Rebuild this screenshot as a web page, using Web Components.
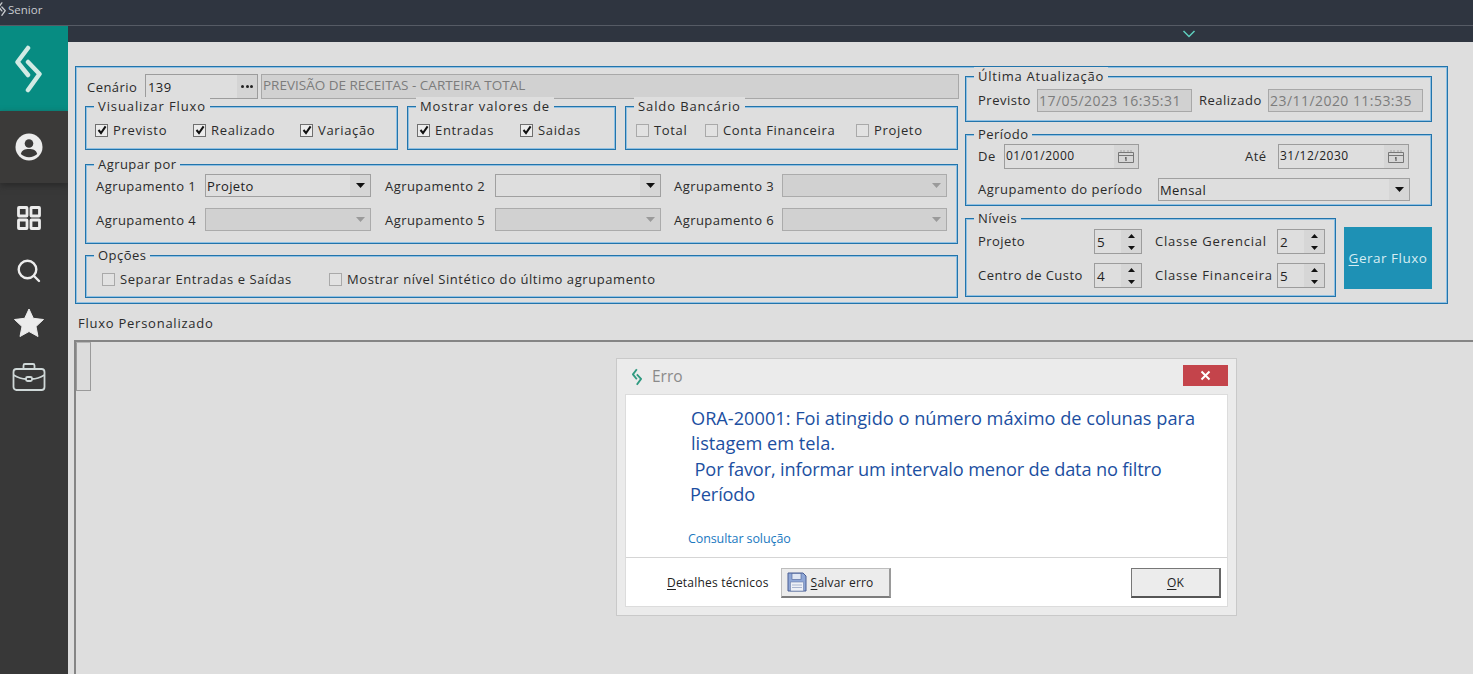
<!DOCTYPE html>
<html lang="pt-BR"><head><meta charset="utf-8"><title>Senior</title>
<style>
html,body{margin:0;height:100%;overflow:hidden;background:#dedede;font:13px "Open Sans","Noto Sans",sans-serif;color:#2b2b2b}
</style></head><body>
<x-app></x-app>
<script>
const def=(name,css,html)=>{
  customElements.define(name,class extends HTMLElement{
    constructor(){super();this.attachShadow({mode:'open'});}
    connectedCallback(){
      const a=n=>this.getAttribute(n)||'';
      this.shadowRoot.innerHTML=`<style>${css}</style>`+(typeof html==='function'?html(a,this):html);
    }
  });
};
const arrow=(c)=>`<svg width="9" height="5" viewBox="0 0 9 5"><path d="M0 0h9L4.500 5z" fill="${c}"/></svg>`;
const logo=(c,w)=>`<svg viewBox="0 0 27 48" width="${w}" height="${w*48/27}" fill="none" stroke="${c}" stroke-width="4.500" stroke-linecap="round" stroke-linejoin="round"><path d="M13 3 2.500 17 13 30"/><path d="M13 17l11.500 12L13 45"/></svg>`;

def('x-group',`:host{display:block;box-sizing:border-box}
fieldset{box-sizing:border-box;margin:0;padding:0 1px 1px;height:100%;border:1px solid #2274ab;border-radius:0;box-shadow:inset 0 0 0 1px #8fc0e2;min-width:0}
legend{padding:0 4px;margin-left:7px;height:18px;line-height:18px;font-size:13px;letter-spacing:var(--ls,.45px);color:#2b2b2b;background:#dedede}`,
a=>`<fieldset><legend>${a('label')}</legend><slot></slot></fieldset>`);

def('x-check',`:host{display:inline-flex;align-items:center;gap:5px;height:18px;white-space:nowrap;letter-spacing:var(--cls,.66px)}
.b{box-sizing:border-box;width:13px;height:13px;border:1px solid #a9a9a9;display:flex;align-items:center;justify-content:center;background:#e2e2e2;flex:none}
.b.on{border-color:#6f6f6f;background:#ececec}`,
a=>`<span class="b ${a('on')?'on':''}">${a('on')?'<svg width="10" height="10" viewBox="0 0 10 10"><path d="M1.500 5 4 8l4.600-6.600" fill="none" stroke="#111" stroke-width="2"/></svg>':''}</span><span>${a('label')}</span>`);

def('x-input',`:host{display:flex;box-sizing:border-box;height:23px;align-items:center;border:1px solid #9c9c9c;padding:0 1px 1px;white-space:nowrap;overflow:hidden;color:#222}
:host([off]){background:#d1d1d1;border-color:#a8a8a8;color:#7c7c7c}`,`<slot></slot>`);

def('x-lookup',`:host{display:flex;box-sizing:border-box;height:25px;align-items:center;border:1px solid #9c9c9c;padding-left:2px;letter-spacing:.4px;color:#222}
span{flex:1}b{width:20px;height:100%;background:#d4d4d4;display:flex;align-items:center;justify-content:center;gap:1.500px}
i{width:3px;height:3px;border-radius:50%;background:#222}`,`<span><slot></slot></span><b><i></i><i></i><i></i></b>`);

def('x-combo',`:host{display:flex;box-sizing:border-box;height:23px;align-items:center;border:1px solid #a0a0a0;padding-left:1px;letter-spacing:.4px;color:#222}
:host([off]){background:#d1d1d1;border-color:#ababab}
span{flex:1}b{width:20px;height:100%;background:#d6d6d6;display:flex;align-items:center;justify-content:center}
:host([off]) b{background:none}`,
(a,t)=>`<span><slot></slot></span><b>${arrow(t.hasAttribute('off')?'#9a9a9a':'#111')}</b>`);

def('x-date',`:host{display:flex;box-sizing:border-box;height:25px;align-items:center;border:1px solid #9c9c9c;padding:0 0 0 1px;font-size:12px;color:#222}
span{flex:1;padding-bottom:2px}b{width:24px;height:100%;background:#d6d6d6;display:flex;align-items:center;justify-content:center}`,
`<span><slot></slot></span><b><svg width="18" height="15" viewBox="0 0 18 15" fill="none" stroke="#777"><path d="M1.500 3.500h15v10h-15zM1.500 6.500h15"/><path d="M4 1.500v2M7 1.500v2M11 1.500v2M14 1.500v2" stroke-dasharray="1 1"/><path d="M9 8v4M8 9h1" stroke="#444"/></svg></b>`);

def('x-spin',`:host{display:flex;box-sizing:border-box;height:25px;width:48px;align-items:center;border:1px solid #9c9c9c;padding-left:2px;color:#222;font-size:13.500px}
span{flex:1}b{width:20px;height:100%;display:flex;flex-direction:column;gap:1px;background:#d6d6d6}
em{flex:1;display:flex;align-items:center;justify-content:center}
em+em svg{transform:rotate(180deg)}`,
`<span><slot></slot></span><b><em><svg width="7" height="4" viewBox="0 0 7 4"><path d="M3.500 0 7 4H0z" fill="#111"/></svg></em><em><svg width="7" height="4" viewBox="0 0 7 4"><path d="M3.500 0 7 4H0z" fill="#111"/></svg></em></b>`);

def('x-titlebar',`:host{display:flex;align-items:center;gap:2px;box-sizing:border-box;height:26px;background:#2f3540;border-bottom:1px solid #565b65;padding:0 0 6px 0;color:#c9ccd0;font-size:11.500px;overflow:hidden}
svg{margin-left:-2px;flex:none}`,
()=>`${logo('#c9ccd0',8)}<span>Senior</span>`);

def('x-strip',`:host{display:flex;justify-content:flex-end;align-items:center;box-sizing:border-box;height:16px;background:#2f3540;padding-right:277px}`,
`<svg width="14" height="8" viewBox="0 0 14 8" fill="none" stroke="#5fcfbe" stroke-width="1.500"><path d="M1.500 1 7 6.500 12.500 1"/></svg>`);

def('x-sidebar',`:host{display:flex;flex-direction:column;width:68px;flex:none;background:#383838;color:#ececec}
.logo{height:85px;background:#078c82;display:flex;align-items:center;justify-content:center;padding-right:12px;box-sizing:border-box}
.user{height:72px;background:#3b3a39;display:flex;align-items:center;justify-content:center;box-shadow:0 3px 6px #2a2a2a;padding-right:11px;box-sizing:border-box}
nav{display:flex;flex-direction:column;align-items:center;padding:23px 11px 0 0;box-sizing:border-box;width:100%}
nav div{height:53px;display:flex;align-items:flex-start;justify-content:center;width:100%}`,
`<div class="logo">${logo('#d2eae4',27)}</div>
<div class="user"><svg width="28" height="28" viewBox="0 0 28 28"><circle cx="14" cy="14" r="13.500" fill="#ececec"/><circle cx="14" cy="10.500" r="4.300" fill="#3b3a39"/><path d="M5.800 21c1-4 4-5 8.200-5s7.200 1 8.200 5c-2 2-5 3.200-8.200 3.200S7.800 23 5.800 21z" fill="#3b3a39"/></svg></div>
<nav>
<div><svg width="24" height="24" viewBox="0 0 24 24" fill="none" stroke="#ececec" stroke-width="2.800"><rect x="1.500" y="1.500" width="8.500" height="8.500" rx=".5"/><rect x="14" y="1.500" width="8.500" height="8.500" rx=".5"/><rect x="1.500" y="14" width="8.500" height="8.500" rx=".5"/><rect x="14" y="14" width="8.500" height="8.500" rx=".5"/></svg></div>
<div><svg width="24" height="24" viewBox="0 0 24 24" fill="none" stroke="#ececec" stroke-width="2.400" stroke-linecap="round"><circle cx="10.500" cy="10.500" r="8.800"/><path d="M17 17l5 5"/></svg></div>
<div><svg width="30" height="29" viewBox="0 0 30 29" style="margin-top:-4px"><path d="M15 1l4.300 9.300 10.200 1.200-7.500 7 2 10L15 23.500 6 28.500l2-10-7.500-7 10.200-1.200z" fill="#ececec" stroke="#ececec" stroke-linejoin="round"/></svg></div>
<div><svg width="34" height="30" viewBox="0 0 34 30" fill="none" stroke="#cfd8d8" stroke-width="1.800" style="margin-top:-3px"><rect x="1.500" y="7" width="31" height="21" rx="3"/><path d="M11.500 7V3.500a1.500 1.500 0 0 1 1.500-1.500h8a1.500 1.500 0 0 1 1.500 1.500V7"/><path d="M1.500 13c5 3 10 4 12.500 4M32.500 13c-5 3-10 4-12.500 4"/><rect x="14" y="15" width="6" height="4" rx="1.500"/></svg></div>
</nav>`);

def('x-form',`:host{display:block;box-sizing:border-box;width:1373px;height:238px;border:1px solid #2274ab;box-shadow:inset 0 0 0 1px #8fc0e2;padding:1px 0 0 9px}
.cols{display:flex;gap:7px;width:1347px}
.l{width:873px;flex:none;padding-top:6px;box-sizing:border-box}
.r{width:467px;flex:none;margin-top:-1px}
.cen{display:flex;align-items:center;height:25px;padding-left:2px;letter-spacing:.45px}
.cen>span{width:58px}
.cen x-lookup{width:113px}
.cen x-input{width:698px;height:25px;margin-left:3px;margin-right:-1px;font-size:13.500px;letter-spacing:0;padding-bottom:3px}
.three{display:flex;gap:9px;margin-top:-2px}
.three x-group{height:53px}
.checks{display:flex;align-items:center;padding:6px 0 0 8px;height:18px}
.agr{height:89px;margin-top:5px}
.grid{display:grid;grid-template-columns:109px 166px 14px 110px 166px 13px 108px 165px;grid-auto-rows:23px;row-gap:11px;padding:1px 0 0 9px;align-items:center;letter-spacing:.45px}
.op{height:52px;margin-top:2px;--cls:.57px}
.ult{height:55px}
.row{display:flex;align-items:center;letter-spacing:.5px}
.row>span{padding-bottom:2px}
.ult .row{padding:4px 0 0 11px}
.ult x-input{width:155px;font-size:14px;letter-spacing:.45px}
.per{height:81px;margin-top:3px}
.per .row{padding-left:11px}
.niv-wrap{display:flex;gap:8px;margin-top:3px}
.niv{height:88px;width:371px;flex:none}
.niv .rows{padding:2px 0 0 11px;display:grid;grid-template-columns:116px 47px 14px 122px 48px;grid-auto-rows:25px;row-gap:9px;align-items:center;letter-spacing:.45px}
.niv .rows>span{padding-bottom:2px}
.niv .rows .w{letter-spacing:.8px;white-space:nowrap}
.gerar{box-sizing:border-box;width:89px;height:62px;margin-top:18px;background:#1e91b5;color:#d6edf3;display:flex;align-items:center;justify-content:center;font-size:13.500px;letter-spacing:.5px}
u{text-underline-offset:2px}
.wide{--ls:.9px}
.ua{--ls:.75px}`,
`<div class="cols"><div class="l">
<div class="cen"><span>Cenário</span><x-lookup>139</x-lookup><x-input off>PREVISÃO DE RECEITAS - CARTEIRA TOTAL</x-input></div>
<div class="three">
<x-group class="wide" label="Visualizar Fluxo" style="width:313px"><div class="checks"><x-check on="1" label="Previsto" style="width:98px"></x-check><x-check on="1" label="Realizado" style="width:107px"></x-check><x-check on="1" label="Variação"></x-check></div></x-group>
<x-group class="wide" label="Mostrar valores de" style="width:209px"><div class="checks"><x-check on="1" label="Entradas" style="width:103px"></x-check><x-check on="1" label="Saidas"></x-check></div></x-group>
<x-group class="wide" label="Saldo Bancário" style="width:333px"><div class="checks" style="padding-left:9px"><x-check label="Total" style="width:69px"></x-check><x-check label="Conta Financeira" style="width:151px"></x-check><x-check label="Projeto"></x-check></div></x-group>
</div>
<x-group class="agr" label="Agrupar por"><div class="grid">
<span>Agrupamento 1</span><x-combo>Projeto</x-combo><i></i><span>Agrupamento 2</span><x-combo></x-combo><i></i><span>Agrupamento 3</span><x-combo off></x-combo>
<span>Agrupamento 4</span><x-combo off></x-combo><i></i><span>Agrupamento 5</span><x-combo off></x-combo><i></i><span>Agrupamento 6</span><x-combo off></x-combo>
</div></x-group>
<x-group class="op" label="Opções"><div class="checks" style="padding:6px 0 0 15px"><x-check label="Separar Entradas e Saídas" style="width:227px"></x-check><x-check label="Mostrar nível Sintético do último agrupamento"></x-check></div></x-group>
</div>
<div class="r">
<x-group class="ult ua" label="Última Atualização"><div class="row"><span style="width:59px">Previsto</span><x-input off>17/05/2023 16:35:31</x-input><span style="width:76px;padding-left:7px;box-sizing:border-box">Realizado</span><x-input off>23/11/2020 11:53:35</x-input></div></x-group>
<x-group class="per" label="Período">
<div class="row" style="padding-top:1px"><span style="width:26px">De</span><x-date style="width:135px">01/01/2000</x-date><span style="width:139px;padding-left:106px;box-sizing:border-box">Até</span><x-date style="width:131px">31/12/2030</x-date></div>
<div class="row" style="padding-top:9px"><span style="width:180px;white-space:nowrap">Agrupamento do período</span><x-combo style="width:252px">Mensal</x-combo></div>
</x-group>
<div class="niv-wrap"><x-group class="niv" label="Níveis"><div class="rows">
<span>Projeto</span><x-spin>5</x-spin><i></i><span class="w">Classe Gerencial</span><x-spin>2</x-spin>
<span>Centro de Custo</span><x-spin>4</x-spin><i></i><span class="w">Classe Financeira</span><x-spin>5</x-spin>
</div></x-group><div class="gerar"><span><u>G</u>erar Fluxo</span></div></div>
</div></div>`);

def('x-dialog',`:host{position:absolute;left:616px;top:358px;box-sizing:border-box;width:621px;height:258px;background:#ebebeb;border:1px solid #c9c9c9;display:flex;flex-direction:column;padding:0 8px 8px}
.t{height:35px;display:flex;align-items:center;gap:10px;padding-left:7px;color:#8a8a8a;font-size:15.500px;flex:none}
.t span{padding-bottom:2px}
.x{margin-left:auto;width:45px;height:21px;background:#c4444b;color:#fff;display:flex;align-items:center;justify-content:center;margin-top:-2px}
.w{flex:1;background:#fff;border:1px solid #dcdcdc;display:flex;flex-direction:column;min-height:0}
.m{flex:1;padding:11px 26px 0 65px;color:#1c4fa1;font-size:18.200px;line-height:25.300px}
.m p{margin:0}
.m p.two{letter-spacing:-.15px;margin-left:-1px}
.m p.link{color:#1a79bf;font-size:12.500px;margin-top:23px;margin-left:-3px;line-height:18px;letter-spacing:-.1px}
.f{height:49px;border-top:1px solid #d5d5d5;display:flex;align-items:center;padding:1px 6px 0 41px;font-size:12px;letter-spacing:.2px;color:#222;flex:none;box-sizing:border-box}
.b{box-sizing:border-box;height:30px;background:#ececec;border:1px solid #bdbdbd;border-bottom:2px solid #7d7d7d;border-right:2px solid #9a9a9a;display:flex;align-items:center;justify-content:center}
.s{width:110px;margin-left:12px;gap:4px;justify-content:flex-start;padding-left:5px}
.ok{width:90px;margin-left:auto;border:1px solid #777;border-bottom:2px solid #555;border-right:2px solid #666}
u{text-underline-offset:2px}`,
`<div class="t"><svg viewBox="0 0 27 48" width="10" height="18" fill="none" stroke="#2f9a80" stroke-width="5" stroke-linejoin="round"><path d="M13 3 2.500 17 13 30"/><path d="M13 17l11.500 12L13 45"/></svg><span>Erro</span>
<div class="x"><svg width="11" height="11" viewBox="0 0 11 11" stroke="#fff" stroke-width="2"><path d="M1.500 1.500l8 8M9.500 1.500l-8 8"/></svg></div></div>
<div class="w"><div class="m"><p>ORA-20001: Foi atingido o número máximo de colunas para listagem em tela.</p><p class="two">&nbsp;Por favor, informar um intervalo menor de data no filtro Período</p><p class="link">Consultar solução</p></div>
<div class="f"><span><u>D</u>etalhes técnicos</span><div class="b s"><svg width="20" height="20" viewBox="0 0 20 20"><path d="M1 1h15l3 3v15H1z" fill="#8fa7d6" stroke="#4a5f94"/><rect x="5" y="1.500" width="9" height="6" fill="#dfe6f3" stroke="#4a5f94" stroke-width=".6"/><rect x="3.500" y="10" width="13" height="9" fill="#eef1f7" stroke="#6a7ca8" stroke-width=".6"/><path d="M5 13h10M5 15.500h10" stroke="#a9b5cf"/></svg><span><u>S</u>alvar erro</span></div><div class="b ok"><span><u>O</u>K</span></div></div></div>`);

def('x-grid',`:host{display:block;flex:1;margin:8px 0 0 6px;box-sizing:border-box;border-top:2px solid #858585;border-left:2px solid #858585}
div{box-sizing:border-box;width:15px;height:49px;border:1px solid #9a9a9a;border-top-color:#b5b5b5;background:#dcdcdc}`,`<div></div>`);

def('x-app',`:host{display:flex;flex-direction:column;height:674px;width:1473px;overflow:hidden;position:relative}
.body{flex:1;display:flex;min-height:0}
.main{flex:1;min-width:0;display:flex;flex-direction:column;background:#dedede}
.pad{padding:24px 0 0 7px}
.cap{margin:10px 0 0 3px;height:18px;line-height:18px;letter-spacing:.75px}`,
`<x-titlebar></x-titlebar>
<div class="body"><x-sidebar></x-sidebar><div class="main"><x-strip></x-strip><div class="pad"><x-form></x-form><div class="cap">Fluxo Personalizado</div></div><x-grid></x-grid></div></div>
<x-dialog></x-dialog>`);
</script>
</body></html>
